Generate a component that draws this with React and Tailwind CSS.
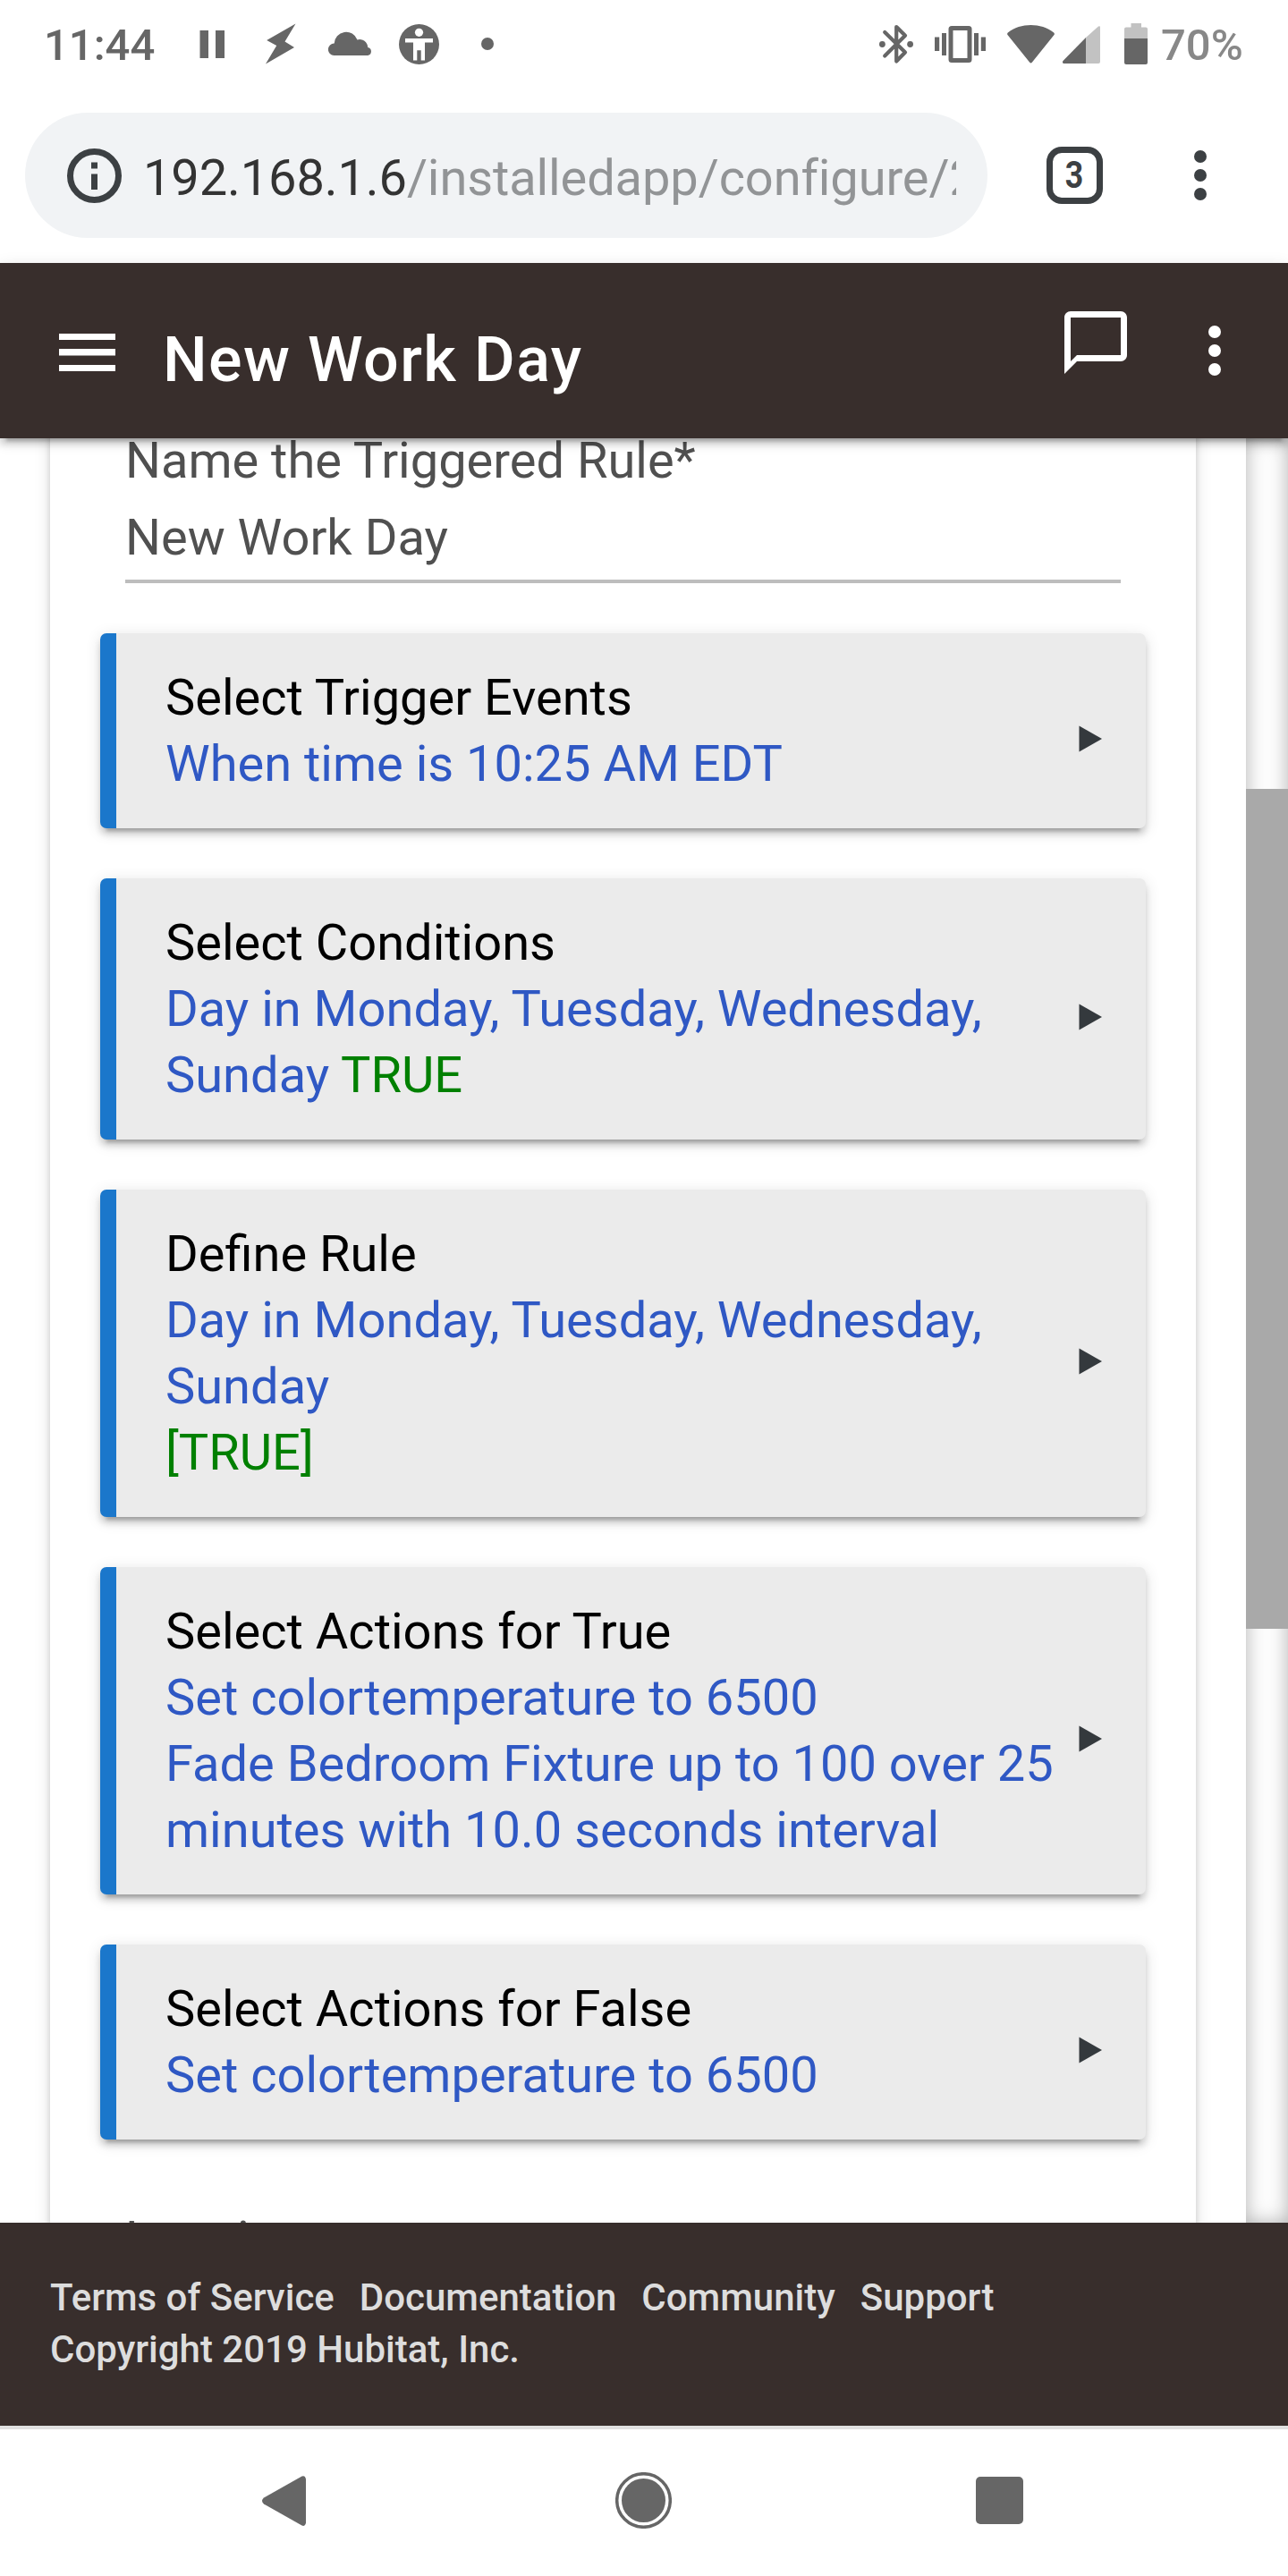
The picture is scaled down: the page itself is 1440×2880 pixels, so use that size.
import React from "react";

const rules = [
  {
    title: "Select Trigger Events",
    lines: [[{ text: "When time is 10:25 AM EDT" }]],
  },
  {
    title: "Select Conditions",
    lines: [
      [
        { text: "Day in Monday, Tuesday, Wednesday, Sunday " },
        { text: "TRUE", ok: true },
      ],
    ],
  },
  {
    title: "Define Rule",
    lines: [
      [{ text: "Day in Monday, Tuesday, Wednesday, Sunday" }],
      [{ text: "[TRUE]", ok: true }],
    ],
  },
  {
    title: "Select Actions for True",
    lines: [
      [{ text: "Set colortemperature to 6500" }],
      [
        {
          text: "Fade Bedroom Fixture up to 100 over 25 minutes with 10.0 seconds interval",
        },
      ],
    ],
  },
  {
    title: "Select Actions for False",
    lines: [[{ text: "Set colortemperature to 6500" }]],
  },
];

const footerLinks = ["Terms of Service", "Documentation", "Community", "Support"];

const StatusBar = () => (
  <div className="h-[98px] shrink-0 flex items-center pl-[49px] pr-[49px] text-[#666] text-[49px] leading-none font-medium">
    <span className="w-[174px] pt-[3px]">11:44</span>
    <svg className="w-7 h-[31px]" viewBox="0 0 28 31" fill="currentColor">
      <path d="M0.5 0h9.5v31h-9.5zM18 0h10v31h-10z" />
    </svg>
    <svg className="ml-[46px] w-[34px] h-[46px]" viewBox="0 0 34 46" fill="currentColor">
      <path d="M33.500 0.500L1.200 19l11 6L0 45.500L32 27l-10.500-6.500z" />
    </svg>
    <svg className="ml-9 w-[49px] h-[27px] -mt-0.5" viewBox="0 0 49 27" fill="currentColor">
      <path d="M6.500 27A6.600 6.600 0 0 1 6.700 13.600A13.300 13.300 0 0 1 32.500 9.500A9 9 0 0 1 44.200 18A4.600 4.600 0 0 1 44.400 27z" />
    </svg>
    <svg className="ml-[30px] w-[45px] h-[45px]" viewBox="0 0 45 45">
      <circle cx="22.5" cy="22.5" r="22.5" fill="currentColor" />
      <g fill="#fff">
        <circle cx="22.500" cy="9.300" r="4.600" />
        <path d="M7 16h31v4.500h-9v20h-4.300v-11.200h-4.400v11.200h-4.300v-20h-9z" />
      </g>
    </svg>
    <span className="ml-[47px] w-3.5 h-3.5 rounded-full bg-[#666]" />

    <svg className="ml-auto w-[38px] h-[45px]" viewBox="0 0 38 45" fill="none" stroke="currentColor" strokeWidth="4.200" strokeLinecap="round" strokeLinejoin="round">
      <path d="M6.200 9L29 31.500L19.200 41.500V3L29 12.800L6.200 35.500" />
      <circle cx="3.400" cy="22.500" r="3.400" fill="currentColor" stroke="none" />
      <circle cx="34.600" cy="22.500" r="3.400" fill="currentColor" stroke="none" />
    </svg>
    <svg className="ml-6 w-[57px] h-[41px]" viewBox="0 0 57 41" fill="currentColor">
      <path d="M0 12.500h5.200v15.500H0zM8 8h5v25H8zM44 8h5v25h-5zM51.800 12.500H57v15.500h-5.200z" />
      <path fillRule="evenodd" d="M19 0h19a3.500 3.500 0 0 1 3.500 3.500v34a3.500 3.500 0 0 1-3.500 3.500h-19a3.500 3.500 0 0 1-3.500-3.500v-34a3.500 3.500 0 0 1 3.500-3.500zM20.500 5v31h16V5z" />
    </svg>
    <svg className="ml-6 w-[53px] h-[43px]" viewBox="0 0 53 43" fill="currentColor">
      <path d="M0.800 8.500C15-2.800 38-2.800 52.200 8.500q1.200 1.200.300 2.500L28 41.500q-1.500 2-3 0L.500 11q-.9-1.300.3-2.500z" />
    </svg>
    <svg className="ml-[9px] w-[42px] h-[42px] mt-0.5" viewBox="0 0 42 42">
      <path d="M26 13L40 .6q2-1 2 1V40q0 2-2 2H26z" fill="#c2c2c2" />
      <path d="M26 13V42H1.500Q-1 41.500.5 39z" fill="currentColor" />
    </svg>
    <svg className="ml-[27px] w-[26px] h-[46px]" viewBox="0 0 26 46">
      <path d="M7.500 0h11.500v4.500h5q2 0 2 2V17H0V6.500q0-2 2-2h5.500z" fill="#c2c2c2" />
      <path d="M0 17h26v27q0 2-2 2H2q-2 0-2-2z" fill="currentColor" />
    </svg>
    <span className="ml-[15px] w-[93px] pt-[3px] text-[#888]">70%</span>
  </div>
);

const AddressBar = () => (
  <div className="h-[196px] shrink-0 flex items-start pt-7 pl-7">
    <div className="w-[1076px] h-[140px] rounded-full bg-[#f1f3f5] flex items-center pl-[47px] pr-[35px]">
      <svg className="w-[61px] h-[61px] shrink-0" viewBox="0 0 61 61" fill="none">
        <circle cx="30.500" cy="30.500" r="27" stroke="#3c4043" strokeWidth="7" />
        <path d="M27 15.500h7v7h-7zM27 28.500h7V46h-7z" fill="#3c4043" />
      </svg>
      <div className="ml-6 mt-[5px] flex-1 overflow-hidden whitespace-nowrap text-[56px] leading-[74px] tracking-[-0.11px] text-[#333]">
        192.168.1.6<span className="text-[#929496]">/installedapp/configure/2</span>
      </div>
    </div>
    <div className="ml-[66px] mt-[38px] w-[63px] h-16 rounded-[17px] border-[7px] border-[#3c4043] flex items-center justify-center text-[42px] leading-none font-bold text-[#3c4043]">
      <span className="inline-block scale-x-[0.85]">3</span>
    </div>
    <svg className="ml-[102px] mt-[42px] w-3.5 h-14" viewBox="0 0 14 56" fill="#3c4043">
      <circle cx="7" cy="7" r="7" />
      <circle cx="7" cy="28" r="7" />
      <circle cx="7" cy="49" r="7" />
    </svg>
  </div>
);

const Header = () => (
  <header className="relative z-10 h-[196px] shrink-0 bg-[#382e2c] text-white flex items-start shadow-[0_7px_7px_0_rgba(0,0,0,0.14),0_10.5px_3.5px_-7px_rgba(0,0,0,0.2),0_3.5px_17.5px_0_rgba(0,0,0,0.12)]">
    <svg className="ml-[66px] mt-[79px] w-[63px] h-[42px]" viewBox="0 0 63 42" fill="currentColor">
      <path d="M0 0h63v7H0zM0 17h63v7.500H0zM0 35h63v7H0z" />
    </svg>
    <h1 className="ml-[53px] mt-[67px] text-[70px] leading-[82px] font-medium tracking-[1.4px] whitespace-nowrap">
      New Work Day
    </h1>
    <svg className="ml-auto mr-[49px] mt-[47px] w-[84px] h-[84px]" viewBox="0 0 24 24" fill="currentColor">
      <path d="M20 2H4c-1.100 0-2 .9-2 2v18l4-4h14c1.100 0 2-.9 2-2V4c0-1.100-.9-2-2-2zm0 14H6l-2 2V4h16v12z" />
    </svg>
    <svg className="mr-10 mt-14 w-[84px] h-[84px]" viewBox="0 0 24 24" fill="currentColor">
      <circle cx="12" cy="6" r="2" />
      <circle cx="12" cy="12" r="2" />
      <circle cx="12" cy="18" r="2" />
    </svg>
  </header>
);

const RuleCard = ({ title, lines }) => (
  <div className="flex items-center justify-between rounded-[7px] border-l-[18px] border-[#1b77cb] bg-[#ebebeb] py-[35px] pl-[55px] pr-[49px] shadow-[0_7px_7px_0_rgba(0,0,0,0.14),0_10.5px_3.5px_-7px_rgba(0,0,0,0.2),0_3.5px_17.5px_0_rgba(0,0,0,0.12)]">
    <div className="w-[1010px] text-[#2f58c4]">
      <div className="text-black">{title}</div>
      {lines.map((line, index) => (
        <div key={index}>
          {line.map((part) => (
            <span key={part.text} className={part.ok ? "text-[#008000]" : ""}>
              {part.text}
            </span>
          ))}
        </div>
      ))}
    </div>
    <svg className="w-[26px] h-[30px] mt-[18px] shrink-0" viewBox="0 0 26 30" fill="#34393d">
      <path d="M0.500 0.500L26 15L0.500 29.500z" />
    </svg>
  </div>
);

const Footer = () => (
  <footer className="h-[227px] shrink-0 bg-[#382e2c] px-14 pt-[55px] text-[42px] leading-[58px] font-medium text-[#ddd]">
    <div className="flex gap-7">
      {footerLinks.map((link) => (
        <a key={link} href="#">
          {link}
        </a>
      ))}
    </div>
    <div>Copyright 2019 Hubitat, Inc.</div>
  </footer>
);

const NavBar = () => (
  <div className="h-[168px] shrink-0 border-t-4 border-[#e0e0e0] bg-white flex items-center pl-[293px] pb-[5px] text-[#666]">
    <svg className="w-[49px] h-14" viewBox="0 0 49 56" fill="currentColor">
      <path d="M49 3.500V52.500Q48 57 44.500 55.500L2 31.500Q-2 28 2 24.500L44.500.5Q48-1 49 3.500z" />
    </svg>
    <svg className="ml-[346px] w-[63px] h-[63px]" viewBox="0 0 63 63" fill="none">
      <circle cx="31.500" cy="31.500" r="29.800" stroke="currentColor" strokeWidth="3.500" />
      <circle cx="31.500" cy="31.500" r="24.500" fill="currentColor" />
    </svg>
    <div className="ml-[340px] w-[53px] h-[53px] rounded-[5px] bg-[#666]" />
  </div>
);

const App = () => {
  return (
    <div className="w-[1440px] h-[2880px] flex flex-col overflow-hidden bg-white font-[Roboto,sans-serif]">
      <StatusBar />
      <AddressBar />
      <Header />

      <main className="h-[1995px] shrink-0 flex overflow-hidden text-[56px] leading-[74px]">
        <div className="flex-1 h-full overflow-hidden pl-14 pr-14">
          <div className="-mt-20 h-[2200px] bg-white px-14 pt-[68px] shadow-[0_7px_7px_0_rgba(0,0,0,0.14),0_10.5px_3.5px_-7px_rgba(0,0,0,0.2),0_3.5px_17.5px_0_rgba(0,0,0,0.12)]">
            <div className="px-7 text-[#505050]">
              <div>Name the Triggered Rule*</div>
              <div className="mt-3 pb-2.5 border-b-4 border-[#bdbdbd]">New Work Day</div>
            </div>
            <div className="mt-14 flex flex-col gap-14">
              {rules.map((rule) => (
                <RuleCard key={rule.title} {...rule} />
              ))}
            </div>
            <div className="mt-[75px] px-7 text-[#505050]">Logging</div>
          </div>
        </div>

        {/* Scrollbar */}
        <div className="w-[47px] h-full bg-[#fdfdfd] pt-[392px] shadow-[inset_0_0_21px_rgba(0,0,0,0.3)]">
          <div className="h-[939px] bg-[#a9a9a9]" />
        </div>
      </main>

      <Footer />
      <NavBar />
    </div>
  );
};

export default App;
